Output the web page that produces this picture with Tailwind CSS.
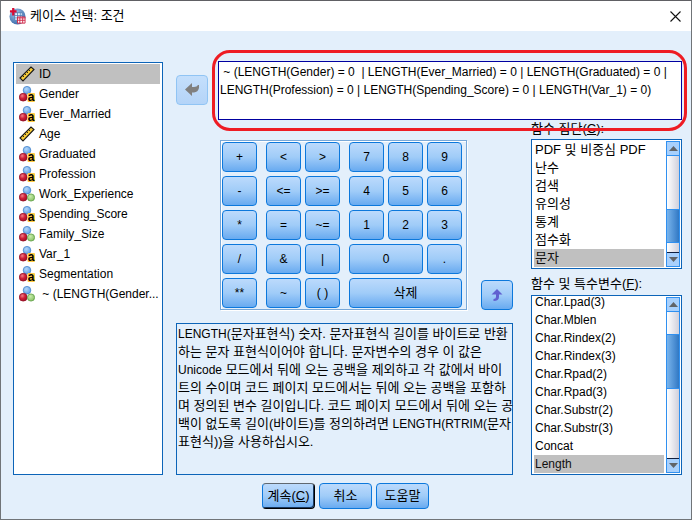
<!DOCTYPE html>
<html lang="ko">
<head>
<meta charset="utf-8">
<meta name="viewport" content="width=device-width, initial-scale=1">
<title>케이스 선택: 조건</title>
<script src="https://cdn.jsdelivr.net/npm/@tailwindcss/browser@4"></script>
</head>
<body class="bg-[#e3effb] font-['Liberation_Sans','Noto_Sans_CJK_KR',sans-serif] text-xs text-black">
<svg class="absolute size-0" aria-hidden="true">
  <defs>
    <radialGradient id="red" cx=".38" cy=".32" r=".7"><stop offset="0" stop-color="#f08088"/><stop offset=".5" stop-color="#d02038"/><stop offset="1" stop-color="#a01028"/></radialGradient>
    <radialGradient id="blue" cx=".4" cy=".35" r=".7"><stop offset="0" stop-color="#b4d8fa"/><stop offset="1" stop-color="#5c9ce4"/></radialGradient>
    <radialGradient id="green" cx=".4" cy=".35" r=".7"><stop offset="0" stop-color="#c8ecac"/><stop offset="1" stop-color="#84c060"/></radialGradient>
    <radialGradient id="globe" cx=".4" cy=".3" r=".75"><stop offset="0" stop-color="#a0c4e8"/><stop offset="1" stop-color="#3868a8"/></radialGradient>
    <symbol id="scale" viewBox="0 0 16 16">
      <path d="M1 12 12 1 15 3.500 4 15Z" fill="#f8cc38" stroke="#181818" stroke-width="1.1"/>
      <path d="M3.500 9.500 5 11M5.500 7.500 7 9M7.500 5.500 9 7M9.500 3.500 11 5" stroke="#181818" stroke-width=".9"/>
    </symbol>
    <symbol id="nominal" viewBox="0 0 16 16">
      <circle cx="8" cy="4.200" r="3.800" fill="url(#blue)" stroke="#4484cc" stroke-width=".8"/>
      <circle cx="4.200" cy="11.200" r="3.900" fill="url(#red)" stroke="#98182c" stroke-width=".8"/>
      <circle cx="12" cy="11.500" r="3.600" fill="url(#green)" stroke="#5c9c44" stroke-width=".8"/>
    </symbol>
    <symbol id="string" viewBox="0 0 16 16">
      <circle cx="8" cy="4.200" r="3.800" fill="url(#blue)" stroke="#4484cc" stroke-width=".8"/>
      <circle cx="4.200" cy="11.200" r="3.900" fill="url(#red)" stroke="#98182c" stroke-width=".8"/>
      <rect x="8.500" y="7" width="7.500" height="9" rx="1" fill="#ffcc44"/>
      <text x="8.700" y="15" font-family="Liberation Sans, sans-serif" font-size="12" font-weight="bold">a</text>
    </symbol>
  </defs>
</svg>
<div class="flex min-h-screen flex-col border border-[#707478] border-t-[#606064]">
  <header class="flex h-[30px] items-center gap-1 bg-white px-2">
    <svg class="size-[17px]" viewBox="0 0 18 18" aria-hidden="true">
      <circle cx="9" cy="9" r="8.500" fill="url(#globe)"/>
      <path d="M6 5h8v8H6zM6 8h8M9 5v8M12 5v8M6 10.500h8" fill="#e8f2fc" stroke="#4878b0" stroke-width=".8"/>
      <path d="M4.500 0v8M1 3.500h7" stroke="#d80c34" stroke-width="2.400"/>
      <path d="M9 9.500h8V16H9z" fill="#fff" stroke="#d02848" stroke-width="1"/>
      <path d="M9 10.500h8M9 13h8M11.500 10v6M14.500 10v6" stroke="#d02848"/>
    </svg>
    <h1 class="flex-1 text-[13px]">케이스 선택: 조건</h1>
    <button type="button" aria-label="닫기" class="flex size-4 items-center justify-center">
      <svg class="size-[11px]" viewBox="0 0 11 11"><path d="M.5.5l10 10M10.500.5l-10 10" stroke="#111" stroke-width="1.100"/></svg>
    </button>
  </header>
  <main class="flex flex-1 flex-col pt-[30px] pr-[9px] pl-3">
    <div class="flex items-stretch gap-[13px]">
      <ul role="listbox" aria-label="변수" class="mt-px w-[150px] shrink-0 border border-[#0c64b8] bg-white px-0.5 py-px">
        <li role="option" aria-selected="true" class="flex h-5 items-center gap-1 bg-[#c0c0c0] pl-[3px]"><svg class="size-4"><use href="#scale"/></svg>ID</li>
        <li role="option" class="flex h-5 items-center gap-1 pl-[3px]"><svg class="size-4"><use href="#string"/></svg>Gender</li>
        <li role="option" class="flex h-5 items-center gap-1 pl-[3px]"><svg class="size-4"><use href="#string"/></svg>Ever_Married</li>
        <li role="option" class="flex h-5 items-center gap-1 pl-[3px]"><svg class="size-4"><use href="#scale"/></svg>Age</li>
        <li role="option" class="flex h-5 items-center gap-1 pl-[3px]"><svg class="size-4"><use href="#string"/></svg>Graduated</li>
        <li role="option" class="flex h-5 items-center gap-1 pl-[3px]"><svg class="size-4"><use href="#string"/></svg>Profession</li>
        <li role="option" class="flex h-5 items-center gap-1 pl-[3px]"><svg class="size-4"><use href="#nominal"/></svg>Work_Experience</li>
        <li role="option" class="flex h-5 items-center gap-1 pl-[3px]"><svg class="size-4"><use href="#string"/></svg>Spending_Score</li>
        <li role="option" class="flex h-5 items-center gap-1 pl-[3px]"><svg class="size-4"><use href="#nominal"/></svg>Family_Size</li>
        <li role="option" class="flex h-5 items-center gap-1 pl-[3px]"><svg class="size-4"><use href="#string"/></svg>Var_1</li>
        <li role="option" class="flex h-5 items-center gap-1 pl-[3px]"><svg class="size-4"><use href="#string"/></svg>Segmentation</li>
        <li role="option" class="flex h-5 items-center gap-1 whitespace-pre pl-[3px]"><svg class="size-4"><use href="#nominal"/></svg> ~ (LENGTH(Gender...</li>
      </ul>
      <div class="min-w-0 flex-1">
        <div class="flex gap-2.5">
          <button type="button" aria-label="조건에서 변수로 이동" class="mt-3.5 flex h-[30px] w-8 shrink-0 items-center justify-center rounded border border-[#90c4f4] bg-linear-to-b from-[#c4dffc] to-[#b4d4f8]">
            <svg class="h-3.5 w-4" viewBox="0 0 16 14"><path d="M1 6.500 8 0v4h2q3 0 4-2h1v3q-1 4-5 4.500H8V13z" fill="#808080"/></svg>
          </button>
          <div class="relative flex-1">
            <textarea aria-label="조건식" spellcheck="false" class="block h-[59px] w-full resize-none overflow-hidden border border-[#0000a0] bg-white p-px text-xs/[18px] outline-none"> ~ (LENGTH(Gender) = 0  | LENGTH(Ever_Married) = 0 | LENGTH(Graduated) = 0 |
LENGTH(Profession) = 0 | LENGTH(Spending_Score) = 0 | LENGTH(Var_1) = 0)</textarea>
            <div class="pointer-events-none absolute -inset-y-[11px] -left-1.5 -right-[5px] rounded-[18px] border-3 border-[#ee1c24]"></div>
          </div>
        </div>
        <div class="flex gap-[18px]">
          <div class="flex min-w-0 flex-1 flex-col pt-5">
            <div class="flex items-end justify-end gap-3.5">
              <div class="flex gap-[9px] border border-[#78a8d8] py-px pl-px pr-1 shadow-[inset_1px_1px_0_#ffffff,1px_1px_0_#ffffff]">
                <div class="grid auto-rows-[30px] grid-cols-[35px] gap-1 *:rounded *:border *:border-[#0c78dc] *:bg-linear-to-b *:from-[#bcdafc] *:via-[#a0ccf8] *:to-[#68aaf0]">
                  <button type="button">+</button><button type="button">-</button><button type="button">*</button><button type="button">/</button><button type="button">**</button>
                </div>
                <div class="grid auto-rows-[30px] grid-cols-[35px_35px] gap-1 *:rounded *:border *:border-[#0c78dc] *:bg-linear-to-b *:from-[#bcdafc] *:via-[#a0ccf8] *:to-[#68aaf0]">
                  <button type="button">&lt;</button><button type="button">&gt;</button>
                  <button type="button">&lt;=</button><button type="button">&gt;=</button>
                  <button type="button">=</button><button type="button">~=</button>
                  <button type="button">&amp;</button><button type="button">|</button>
                  <button type="button">~</button><button type="button">( )</button>
                </div>
                <div class="grid auto-rows-[30px] grid-cols-[35px_35px_35px] gap-1 *:rounded *:border *:border-[#0c78dc] *:bg-linear-to-b *:from-[#bcdafc] *:via-[#a0ccf8] *:to-[#68aaf0]">
                  <button type="button">7</button><button type="button">8</button><button type="button">9</button>
                  <button type="button">4</button><button type="button">5</button><button type="button">6</button>
                  <button type="button">1</button><button type="button">2</button><button type="button">3</button>
                  <button type="button" class="col-span-2">0</button><button type="button">.</button>
                  <button type="button" class="col-span-3 text-[13px]">삭제</button>
                </div>
              </div>
              <button type="button" aria-label="함수 삽입" class="flex h-[30px] w-8 items-center justify-center rounded border border-[#0c78dc] bg-linear-to-b from-[#bcdafc] via-[#a0ccf8] to-[#68aaf0]">
                <svg class="h-3.5 w-3" viewBox="0 0 12 14"><path d="M6 1 11.500 6.500H8V9q0 4-5.500 4v-2Q5 11 5 9V6.500H.5z" fill="#6060d0"/></svg>
              </button>
            </div>
            <p class="mt-[13px] h-[152px] whitespace-nowrap border border-[#0c64b8] pl-px pt-px text-[13px]/[18px]"><span class="text-xs">LENGTH(</span>문자표현식) 숫자. 문자표현식 길이를 바이트로 반환<br>하는 문자 표현식이어야 합니다. 문자변수의 경우 이 값은<br><span class="text-xs">Unicode</span> 모드에서 뒤에 오는 공백을 제외하고 각 값에서 바이<br>트의 수이며 코드 페이지 모드에서는 뒤에 오는 공백을 포함하<br>며 정의된 변수 길이입니다. 코드 페이지 모드에서 뒤에 오는 공<br>백이 없도록 길이(바이트)를 정의하려면 <span class="text-xs">LENGTH(RTRIM(</span>문자<br>표현식))을 사용하십시오.</p>
          </div>
          <div class="flex w-[151px] shrink-0 flex-col">
            <label for="group" class="h-[19px] text-[13px]/[18px]">함수 집단(<u>C</u>):</label>
            <div class="flex h-[130px] gap-0.5 border border-[#0c64b8] bg-white py-px pl-0.5 pr-px">
              <select id="group" size="7" class="min-w-0 flex-1 appearance-none overflow-hidden text-[13px] outline-none [scrollbar-width:none] *:flex *:h-[18px] *:min-h-0 *:items-center *:pt-0 *:pr-0 *:pb-[3px] *:pl-px *:checked:bg-[#c0c0c0] *:checked:bg-linear-to-b *:checked:from-[#c0c0c0] *:checked:to-[#c0c0c0]">
                <option>PDF 및 비중심 PDF</option><option>난수</option><option>검색</option><option>유의성</option><option>통계</option><option>점수화</option><option selected>문자</option>
              </select>
              <div class="flex w-3.5 flex-col border border-[#3090f0] bg-linear-to-r from-white to-[#d0d0dc]" aria-hidden="true">
                <div class="flex h-3.5 items-center justify-center border-b border-[#3090f0] bg-[#a8d0fc]"><svg class="h-[5px] w-[9px]" viewBox="0 0 9 5"><path d="M0 5 4.500 0 9 5z" fill="#606468"/></svg></div>
                <div class="flex-1"></div>
                <div class="h-[34px] border-y border-[#3090f0] bg-linear-to-r from-[#78b4ec] to-[#3078c4]"></div>
                <div class="h-[9px]"></div>
                <div class="flex h-3.5 items-center justify-center border-t border-[#102040] bg-[#a8d0fc]"><svg class="h-[5px] w-[9px]" viewBox="0 0 9 5"><path d="M0 0h9L4.500 5z" fill="#606468"/></svg></div>
              </div>
            </div>
            <label for="func" class="mt-1.5 h-5 text-[13px]/[18px]">함수 및 특수변수(<u>F</u>):</label>
            <div class="flex h-[180px] gap-0.5 border border-[#0c64b8] bg-white pb-px pl-0.5 pr-px">
              <select id="func" size="10" class="min-w-0 flex-1 appearance-none overflow-hidden text-xs outline-none [scrollbar-width:none] *:flex *:h-[18px] *:min-h-0 *:items-center *:p-0 *:pl-px *:checked:bg-[#c0c0c0] *:checked:bg-linear-to-b *:checked:from-[#c0c0c0] *:checked:to-[#c0c0c0]">
                <option>Char.Lpad(3)</option><option>Char.Mblen</option><option>Char.Rindex(2)</option><option>Char.Rindex(3)</option><option>Char.Rpad(2)</option><option>Char.Rpad(3)</option><option>Char.Substr(2)</option><option>Char.Substr(3)</option><option>Concat</option><option selected>Length</option>
              </select>
              <div class="mt-px flex w-3.5 flex-col border border-[#3090f0] bg-linear-to-r from-white to-[#d0d0dc]" aria-hidden="true">
                <div class="flex h-3.5 items-center justify-center border-b border-[#3090f0] bg-[#a8d0fc]"><svg class="h-[5px] w-[9px]" viewBox="0 0 9 5"><path d="M0 5 4.500 0 9 5z" fill="#606468"/></svg></div>
                <div class="h-[22px]"></div>
                <div class="h-[55px] border-y border-[#3090f0] bg-linear-to-r from-[#78b4ec] to-[#3078c4]"></div>
                <div class="flex-1"></div>
                <div class="flex h-3.5 items-center justify-center border-t border-[#102040] bg-[#a8d0fc]"><svg class="h-[5px] w-[9px]" viewBox="0 0 9 5"><path d="M0 0h9L4.500 5z" fill="#606468"/></svg></div>
              </div>
            </div>
          </div>
        </div>
      </div>
    </div>
    <footer class="flex justify-center gap-1 pt-2 pr-1 *:h-[26px] *:w-[53px] *:rounded *:border *:bg-linear-to-b *:from-[#bcdafc] *:via-[#a0ccf8] *:to-[#68aaf0] *:text-[13px]">
      <button type="button" class="border-black border-t-[#606870] border-l-[#0c78dc] shadow-[inset_-1px_-1px_0_#183860]">계속(<u>C</u>)</button>
      <button type="button" class="border-[#0c78dc]">취소</button>
      <button type="button" class="border-[#0c78dc]">도움말</button>
    </footer>
  </main>
</div>
</body>
</html>
